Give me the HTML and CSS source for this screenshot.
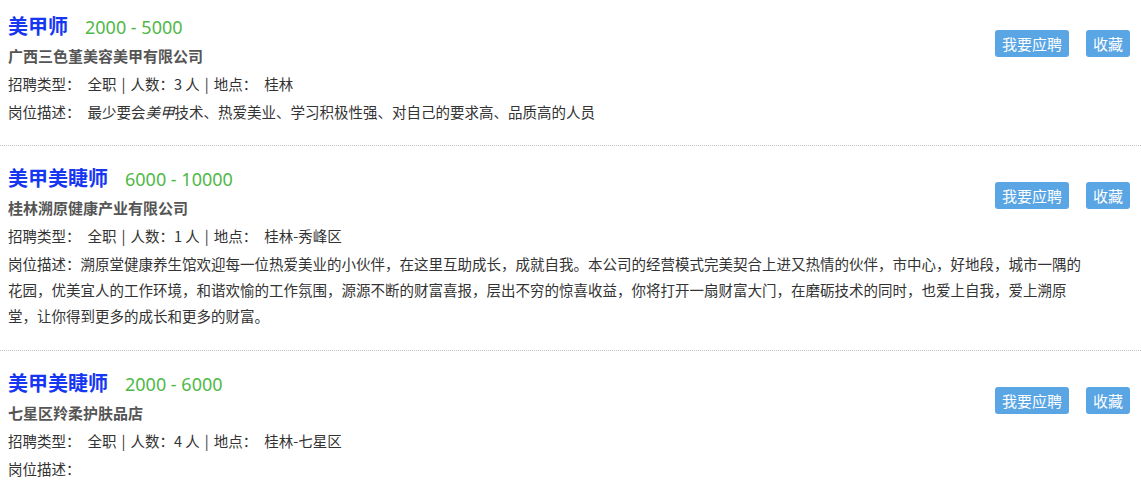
FILE: index.html
```html
<!DOCTYPE html>
<html lang="zh-CN">
<head>
  <meta charset="UTF-8">
  <meta name="viewport" content="width=device-width, initial-scale=1.0">
  <title>职位列表</title>
  <link rel="stylesheet" href="styles.css">
</head>
<body>
  <div class="job-list">
    <div class="job">
      <div class="job-head">
        <div class="job-main">
          <h3 class="job-title"><a href="#">美甲师</a><span class="salary">2000 - 5000</span></h3>
          <p class="company">广西三色堇美容美甲有限公司</p>
          <p class="meta"><span class="label">招聘类型：</span>全职<span class="sep">|</span>人数：3 人<span class="sep">|</span><span class="label">地点：</span>桂林</p>
        </div>
        <div class="job-actions">
          <button class="btn">我要应聘</button>
          <button class="btn">收藏</button>
        </div>
      </div>
      <p class="desc"><span class="label">岗位描述：</span>最少要会<i>美甲</i>技术、热爱美业、学习积极性强、对自己的要求高、品质高的人员</p>
    </div>

    <div class="job">
      <div class="job-head">
        <div class="job-main">
          <h3 class="job-title"><a href="#">美甲美睫师</a><span class="salary">6000 - 10000</span></h3>
          <p class="company">桂林溯原健康产业有限公司</p>
          <p class="meta"><span class="label">招聘类型：</span>全职<span class="sep">|</span>人数：1 人<span class="sep">|</span><span class="label">地点：</span>桂林-秀峰区</p>
        </div>
        <div class="job-actions">
          <button class="btn">我要应聘</button>
          <button class="btn">收藏</button>
        </div>
      </div>
      <p class="desc">岗位描述：溯原堂健康养生馆欢迎每一位热爱美业的小伙伴，在这里互助成长，成就自我。本公司的经营模式完美契合上进又热情的伙伴，市中心，好地段，城市一隅的花园，优美宜人的工作环境，和谐欢愉的工作氛围，源源不断的财富喜报，层出不穷的惊喜收益，你将打开一扇财富大门，在磨砺技术的同时，也爱上自我，爱上溯原堂，让你得到更多的成长和更多的财富。</p>
    </div>

    <div class="job">
      <div class="job-head">
        <div class="job-main">
          <h3 class="job-title"><a href="#">美甲美睫师</a><span class="salary">2000 - 6000</span></h3>
          <p class="company">七星区羚柔护肤品店</p>
          <p class="meta"><span class="label">招聘类型：</span>全职<span class="sep">|</span>人数：4 人<span class="sep">|</span><span class="label">地点：</span>桂林-七星区</p>
        </div>
        <div class="job-actions">
          <button class="btn">我要应聘</button>
          <button class="btn">收藏</button>
        </div>
      </div>
      <p class="desc">岗位描述：</p>
    </div>
  </div>
</body>
</html>
```

FILE: styles.css
```css
* {
  box-sizing: border-box;
}
body {
  margin: 0;
  background-color: #fff;
  color: #333;
  font-family: "Noto Sans CJK SC", "Microsoft YaHei", sans-serif;
  font-size: 14.5px;
}

/* 单个职位 */
.job {
  padding: 18px 11px 21px 8px;
  border-bottom: 1px dotted #c4c4c4;
}
.job:first-child {
  padding-top: 12px;
  padding-bottom: 20px;
}
.job-head {
  display: flex;
  justify-content: space-between;
  align-items: flex-start;
}

/* 标题和薪资 */
.job-title {
  margin: 0;
  line-height: 28px;
  font-size: 20px;
  font-weight: bold;
}
.job-title a {
  color: #1636f2;
  text-decoration: none;
}
.salary {
  margin-left: 17px;
  font-family: "Noto Sans", sans-serif;
  font-size: 18px;
  font-weight: normal;
  color: #4fb947;
}

.job p {
  margin: 2px 0 0;
  line-height: 26px;
}
.company {
  font-size: 15px;
  font-weight: bold;
  color: #555;
}
.label {
  margin-right: 7px;
}
.sep {
  margin: 0 5px;
}
.desc {
  margin-right: 42px !important;
}

/* 按钮 */
.job-actions {
  display: flex;
  gap: 17px;
  margin-top: 18px;
}
.btn {
  height: 27px;
  padding: 0 7px;
  border: 0;
  border-radius: 3px;
  background-color: #5aa5e4;
  color: #fff;
  font-family: "Noto Sans CJK SC", "Microsoft YaHei", sans-serif;
  font-size: 15px;
  line-height: 27px;
  cursor: pointer;
}
```
